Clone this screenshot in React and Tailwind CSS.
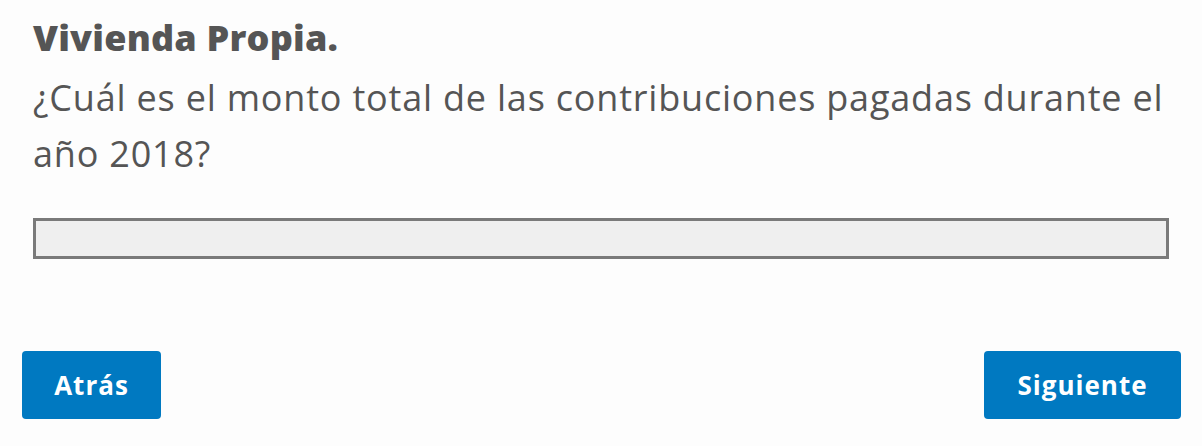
export default function App() {
  return (
    <div className="min-h-screen bg-[#fdfdfd] pl-[22px] pr-[21px] pt-[18px] font-['Open_Sans',sans-serif] text-[#555555]">
      <div className="pl-[11px] pr-[12px]">
        <h2 className="text-[36px] font-extrabold leading-[40px] tracking-[0.2px]">Vivienda Propia.</h2>
        <p className="mt-[12px] text-[36px] leading-[56px] tracking-[0.8px]">
          ¿Cuál es el monto total de las contribuciones pagadas durante el
          <br />
          año 2018?
        </p>
        <input
          type="text"
          className="mt-[36px] block h-[41px] w-full border-[3px] border-[#7a7a7a] bg-[#efefef] outline-none"
        />
      </div>
      <div className="mt-[92px] flex items-center justify-between">
        <button className="h-[68px] w-[139px] rounded-[4px] bg-[#0079c1] text-[26px] font-bold tracking-[1px] text-white">
          Atrás
        </button>
        <button className="h-[68px] w-[197px] rounded-[4px] bg-[#0079c1] text-[26px] font-bold tracking-[1px] text-white">
          Siguiente
        </button>
      </div>
    </div>
  );
}
